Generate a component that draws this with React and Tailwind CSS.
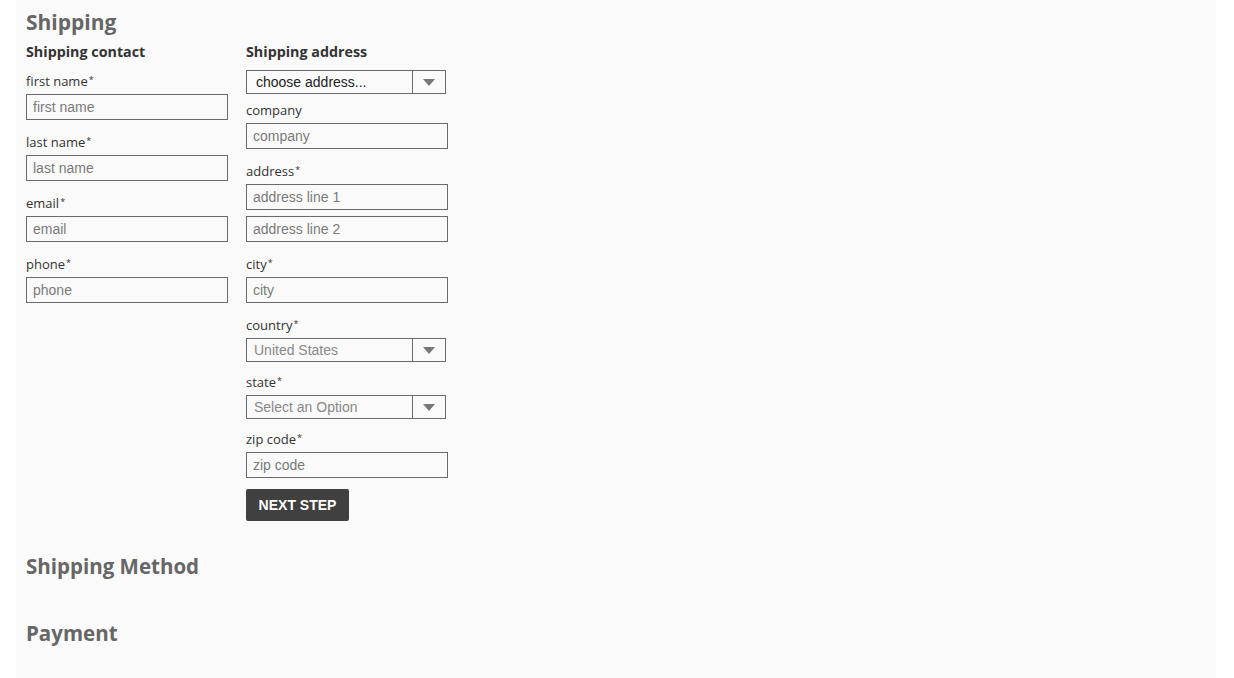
import { useState } from 'react';

const heading = "font-['Open_Sans','DejaVu_Sans',sans-serif]";
const arial = "font-['Liberation_Sans',Arial,sans-serif]";

function Label({ text, required }) {
  return (
    <label className={`block text-[13px] leading-[16px] text-[#333] ${heading}`}>
      {text}
      {required && <span className="ml-[1px] text-[9px] leading-none align-[3px]">*</span>}
    </label>
  );
}

function TextInput({ placeholder, className = '' }) {
  return (
    <input
      type="text"
      placeholder={placeholder}
      className={`block w-[202px] h-[26px] border border-[#6b6b6b] bg-[#fafafa] pl-[6px] text-[14px] text-[#333] placeholder-[#7a7a7a] outline-none ${arial} ${className}`}
    />
  );
}

function SelectBox({ value, muted, padLeft = 'pl-[7px]' }) {
  return (
    <div className={`flex w-[200px] h-[24px] border border-[#6b6b6b] bg-[#fafafa] ${arial}`}>
      <div className={`flex-1 flex items-center ${padLeft} text-[14px] ${muted ? 'text-[#888]' : 'text-[#222]'}`}>
        {value}
      </div>
      <div className="w-[33px] border-l border-[#6b6b6b] flex items-center justify-center">
        <svg width="12" height="7" viewBox="0 0 12 7">
          <polygon points="0,0 12,0 6,7" fill="#777" />
        </svg>
      </div>
    </div>
  );
}

function Field({ label, placeholder }) {
  return (
    <div className="mb-[14px]">
      <Label text={label} required />
      <TextInput placeholder={placeholder} className="mt-[5px]" />
    </div>
  );
}

export default function App() {
  const [step] = useState(1);

  return (
    <div className="min-h-screen bg-white">
      <div className="ml-4 w-[1200px] min-h-[678px] bg-[#fafafa] pl-[10px]">
        <h2 className={`pt-[9px] text-[21px] leading-[26px] font-bold text-[#666] ${heading}`}>Shipping</h2>

        <div className="flex gap-[18px] mt-[8px]">
          <div className="w-[202px]">
            <h3 className={`text-[14.3px] leading-[18px] font-bold text-[#333] ${heading}`}>Shipping contact</h3>
            <div className="mt-[12px]">
              <Field label="first name" placeholder="first name" />
              <Field label="last name" placeholder="last name" />
              <Field label="email" placeholder="email" />
              <Field label="phone" placeholder="phone" />
            </div>
          </div>

          <div className="w-[202px]">
            <h3 className={`text-[14.3px] leading-[18px] font-bold text-[#333] ${heading}`}>Shipping address</h3>
            <div className="mt-[9px]">
              <SelectBox value="choose address..." padLeft="pl-[9px]" />
            </div>
            <div className="mt-[8px]">
              <Label text="company" />
              <TextInput placeholder="company" className="mt-[5px]" />
            </div>
            <div className="mt-[14px]">
              <Label text="address" required />
              <TextInput placeholder="address line 1" className="mt-[5px]" />
              <TextInput placeholder="address line 2" className="mt-[6px]" />
            </div>
            <div className="mt-[14px]">
              <Label text="city" required />
              <TextInput placeholder="city" className="mt-[5px]" />
            </div>
            <div className="mt-[14px]">
              <Label text="country" required />
              <div className="mt-[5px]">
                <SelectBox value="United States" muted />
              </div>
            </div>
            <div className="mt-[12px]">
              <Label text="state" required />
              <div className="mt-[5px]">
                <SelectBox value="Select an Option" muted />
              </div>
            </div>
            <div className="mt-[12px]">
              <Label text="zip code" required />
              <TextInput placeholder="zip code" className="mt-[5px]" />
            </div>
            <button
              type="button"
              className={`mt-[11px] w-[103px] h-[32px] rounded-[2px] bg-[#404040] text-white text-[14px] font-bold uppercase ${arial}`}
            >
              {step === 1 ? 'Next Step' : 'Continue'}
            </button>
          </div>
        </div>

        <h2 className={`mt-[32px] text-[20.5px] leading-[26px] font-bold text-[#666] ${heading}`}>Shipping Method</h2>
        <h2 className={`mt-[41px] text-[20.5px] leading-[26px] font-bold text-[#666] ${heading}`}>Payment</h2>
      </div>
    </div>
  );
}
